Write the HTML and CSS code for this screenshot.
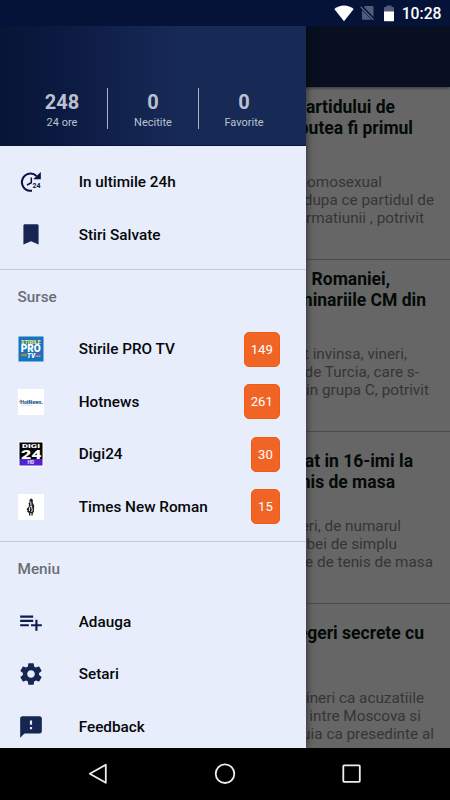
FILE: index.html
```html
<!DOCTYPE html>
<html lang="ro">
<head>
<meta charset="utf-8">
<title>Stiri</title>
<link rel="stylesheet" href="styles.css">
</head>
<body>
<div class="phone">
  <header class="status">
    <svg class="wifi" width="20" height="17" viewBox="0 0 20 17"><path d="M.3 4.1C5.700-.6 14.300-.6 19.700 4.100L10 16.200z" fill="#fff"/></svg>
    <svg class="sim" width="15" height="16" viewBox="0 0 15 16"><path d="M5 1h7.500q1 0 1 1v10L4 2zM2 5l9.700 9.800H3q-1 0-1-1z" fill="#505c78"/><path d="M.7 1.800l12.800 13" stroke="#68738b" stroke-width="1.200"/></svg>
    <svg class="battery" width="10" height="17" viewBox="0 0 10 17"><path d="M0 2.500Q0 2 .6 2H2.500V.5h5V2h1.900q.6 0 .6.500V7H0z" fill="#505c78"/><path d="M0 6.500h10v9q0 .7-.7.700H.7q-.7 0-.7-.7z" fill="#fff"/></svg>
    <span class="clock">10:28</span>
  </header>

  <div class="screen">
    <main class="feed">
      <div class="appbar"></div>
      <article class="story first">
        <h2><span class="r55">partidului de</span><span class="r37">putea fi primul</span></h2>
        <p><span class="r68">homosexual</span><span class="r16">dupa ce partidul de</span><span class="r26">formatiunii , potrivit</span></p>
      </article>
      <article class="story second">
        <h2><span class="r60">Romaniei,</span><span class="r24">preliminariile CM din</span></h2>
        <p><span class="r43">fost invinsa, vineri,</span><span class="r31">de Turcia, care s-</span><span class="r21">din grupa C, potrivit</span></p>
      </article>
      <article class="story third">
        <h2><span class="r37">eliminat in 16-imi la</span><span class="r55">tenis de masa</span></h2>
        <p><span class="r49">vineri, de numarul</span><span class="r53">probei de simplu</span><span class="r17">e de tenis de masa</span></p>
      </article>
      <article class="story fourth">
        <h2><span class="r26">alegeri secrete cu</span></h2>
        <p><span class="r26">vineri ca acuzatiile</span><span class="r29">intre Moscova si</span><span class="r16">ingaduia ca presedinte al</span></p>
      </article>
    </main>

    <aside class="drawer">
      <div class="stats">
        <div class="stat"><b>248</b><span>24 ore</span></div>
        <div class="stat"><b>0</b><span>Necitite</span></div>
        <div class="stat"><b>0</b><span>Favorite</span></div>
      </div>
      <nav class="group">
        <a class="item"><span class="icon"><svg width="26" height="26" viewBox="0 0 26 26"><path d="M14 21.800H12A8.600 8.600 0 1 1 18.500 7" fill="none" stroke="#0b0f45" stroke-width="2"/><path d="M22.800 3V10.200h-7.600z" fill="#0b0f45"/><path d="M13.300 8.500v5.200l-4.300 2.300" fill="none" stroke="#0b0f45" stroke-width="1.500"/><text x="14.600" y="18.600" textLength="8" lengthAdjust="spacingAndGlyphs" class="tiny24">24</text></svg></span>In ultimile 24h</a>
        <a class="item"><span class="icon"><svg width="26" height="26" viewBox="0 0 24 24"><path d="M17.700 2H6.300C5.600 2 5 2.600 5 3.300V20.700l7-3 7 3V3.300C19 2.600 18.400 2 17.700 2z" fill="#152653"/></svg></span>Stiri Salvate</a>
      </nav>
      <nav class="group">
        <h3>Surse</h3>
        <a class="item"><span class="icon"><svg width="26" height="26" viewBox="0 0 26 26"><rect x=".5" y=".5" width="25" height="25" fill="#1673bf"/><text x="3" y="7.800" textLength="19.500" lengthAdjust="spacingAndGlyphs" class="logo yellow">STIRILE</text><path d="M3 17.500h6v1H3z" fill="#d33"/><path d="M3 18.500h6v1H3z" fill="#eb3"/><path d="M3 19.500h6v1H3z" fill="#3a5"/><path d="M17.500 17.500h5v2h-5z" fill="#c33867"/><path d="M17.500 19.500h5V21h-5z" fill="#54b9db"/><text x="2.700" y="16.200" textLength="20" lengthAdjust="spacingAndGlyphs" class="logo pro">PRO</text><text x="9" y="21.500" class="logo tv">TV</text></svg></span>Stirile PRO TV<em>149</em></a>
        <a class="item"><span class="icon"><svg width="26" height="26" viewBox="0 0 26 26"><path d="M0 0h26v26H0z" fill="#fff"/><path d="M3.200 10L.5 12.500 3.200 15z" fill="#f5b829"/><text x="2.300" y="14.600" textLength="22.700" lengthAdjust="spacingAndGlyphs" class="logo hot">HotNews.</text><path d="M3 16.200h11" stroke="#c4dbe9" stroke-width=".7"/></svg></span>Hotnews<em>261</em></a>
        <a class="item"><span class="icon"><svg width="26" height="26" viewBox="0 0 26 26"><path d="M0 0h26v26H0z" fill="#f7f7f8"/><path d="M1.500 1.500h23V18h-23z" fill="#050505"/><path d="M1.500 18h23v6.500h-23z" fill="#4f24d0"/><text x="4" y="6.800" textLength="18" lengthAdjust="spacingAndGlyphs" class="logo digi">DIGI</text><text x="3" y="17.500" textLength="20.500" lengthAdjust="spacingAndGlyphs" class="logo big">24</text><text x="9.500" y="23" class="logo hd">HD</text></svg></span>Digi24<em>30</em></a>
        <a class="item"><span class="icon"><svg width="26" height="26" viewBox="0 0 26 26"><path d="M0 0h26v26H0z" fill="#fff"/><path d="M12.800 4.500c2 0 2.400 2 1.900 4l1.500 3.300-.3 6.200-1 1-.3 2.500h-1.200V19h-1v2.500H11V19l-1.800-1.300.2-1.700-1-.8 2.300-2.400.3-2.300-.7-.8 1.200-1.500c-.2-2 .2-3.500 1.300-3.500z" fill="#222"/><path d="M11.700 7.500l1.200 1 .1 3-1.500 2v3.500M13.300 12l1 4-.8 2" stroke="#e2e2e2" fill="none" stroke-width="1"/></svg></span>Times New Roman<em>15</em></a>
      </nav>
      <nav class="group">
        <h3>Meniu</h3>
        <a class="item"><span class="icon"><svg width="26" height="26" viewBox="0 0 24 24"><path d="M14 10H2v2h12v-2zm0-4H2v2h12V6zm4 8v-4h-2v4h-4v2h4v4h2v-4h4v-2h-4zM2 14h8v2H2z" fill="#101b51"/></svg></span>Adauga</a>
        <a class="item"><span class="icon"><svg width="26" height="26" viewBox="0 0 24 24"><path d="M19.430 12.980c.04-.32.07-.64.07-.98s-.03-.66-.07-.98l2.110-1.650c.19-.15.24-.42.12-.64l-2-3.460c-.12-.22-.39-.3-.61-.22l-2.490 1c-.52-.4-1.080-.73-1.690-.98l-.38-2.650C14.460 2.180 14.250 2 14 2h-4c-.25 0-.46.18-.49.42l-.38 2.650c-.61.25-1.170.59-1.690.98l-2.490-1c-.23-.09-.49 0-.61.22l-2 3.460c-.13.22-.07.49.12.64l2.110 1.650c-.04.32-.07.65-.07.98s.03.66.07.98l-2.110 1.650c-.19.15-.24.42-.12.64l2 3.460c.12.22.39.3.61.22l2.490-1c.52.4 1.080.73 1.690.98l.38 2.650c.03.24.24.42.49.42h4c.25 0 .46-.18.49-.42l.38-2.650c.61-.25 1.170-.59 1.690-.98l2.490 1c.23.09.49 0 .61-.22l2-3.460c.12-.22.07-.49-.12-.64l-2.110-1.650zM12 15.500c-1.930 0-3.500-1.570-3.500-3.500s1.570-3.500 3.500-3.500 3.500 1.570 3.500 3.500-1.570 3.500-3.500 3.500z" fill="#152653"/></svg></span>Setari</a>
        <a class="item"><span class="icon"><svg width="26" height="26" viewBox="0 0 24 24"><path d="M20 2H4c-1.100 0-1.990.9-1.990 2L2 22l4-4h14c1.100 0 2-.9 2-2V4c0-1.100-.9-2-2-2zm-7 12h-2v-2h2v2zm0-4h-2V6h2v4z" fill="#152653"/></svg></span>Feedback</a>
      </nav>
    </aside>
  </div>

  <footer class="navbar">
    <svg width="22" height="24" viewBox="0 0 22 24"><path d="M18.800 2.800v18L2.800 11.800z"/></svg>
    <svg width="22" height="24" viewBox="0 0 22 24"><circle cx="11" cy="11.700" r="9.300"/></svg>
    <svg width="22" height="24" viewBox="0 0 22 24"><rect x="2.300" y="3.300" width="16.500" height="16.500" rx=".8"/></svg>
  </footer>
</div>
</body>
</html>
```

FILE: styles.css
```css
* { box-sizing: border-box; }
body { margin: 0; font-family: Roboto, "Liberation Sans", sans-serif; }
.phone { width: 450px; height: 800px; display: flex; flex-direction: column; overflow: hidden; background: #000; }

.status { height: 26px; flex: none; background: #051338; display: flex; align-items: flex-start; justify-content: flex-end; padding: 5px 8.500px 0 0; color: #fff; }
.status svg { flex: none; }
.wifi { margin-right: 6px; }
.sim { margin-right: 8.500px; }
.battery { margin-right: 8px; }
.clock { font-size: 15.700px; font-weight: 500; line-height: 18px; }

.screen { position: relative; height: 722px; flex: none; overflow: hidden; background: #666; }
.appbar { height: 61px; background: #080f20; box-shadow: 0 1px 3px rgba(0, 0, 0, .5); }
.story { border-bottom: 1px solid #4b4b4b; text-align: right; white-space: nowrap; display: flex; flex-direction: column; justify-content: space-between; }
.story span { display: block; }
.story h2 { margin: 0; font-size: 17.500px; line-height: 21px; font-weight: 700; color: #040a06; }
.story p { margin: 0; font-size: 15.300px; line-height: 18px; color: #353535; }
.first { height: 173px; padding: 10px 0 32px; }
.second { height: 172px; padding: 9px 0 32px; }
.third { height: 172px; padding: 19px 0 32px; }
.fourth { height: 172px; padding: 19px 0 33px; border: 0; }
.r16 { padding-right: 16px; }
.r17 { padding-right: 17px; }
.r21 { padding-right: 21px; }
.r24 { padding-right: 24px; }
.r26 { padding-right: 26px; }
.r29 { padding-right: 29px; }
.r31 { padding-right: 31px; }
.r37 { padding-right: 37px; }
.r43 { padding-right: 43px; }
.r49 { padding-right: 49px; }
.r53 { padding-right: 53px; }
.r55 { padding-right: 55px; }
.r60 { padding-right: 60px; }
.r68 { padding-right: 68px; }

.drawer { position: absolute; top: 0; left: 0; width: 306px; height: 722px; overflow: hidden; background: #e7edfb; box-shadow: 0 0 8px rgba(0, 0, 0, .65); }
.stats { height: 120px; display: flex; padding: 62px 17px 0 17px; background: linear-gradient(90deg, #071536 0, #0b1a41 20%, #12234e 42%, #172a55 60%, #172a55 100%); border-bottom: 1px solid #09133a; }
.stat { flex: 1; height: 41px; display: flex; flex-direction: column; align-items: center; color: #bbc1d0; }
.stat + .stat { border-left: 1px solid #b0b3b8; }
.stat b { font-size: 20px; line-height: 23px; margin-top: 3px; }
.stat span { font-size: 11px; line-height: 14px; margin-top: 2px; }

.group { padding: 10px 0 7.500px; }
.group + .group { border-top: 1px solid #c5cad7; padding: 0 0 8.500px; }
.group h3 { margin: 0; height: 53.400px; padding-left: 17.500px; font-size: 15.300px; line-height: 55px; font-weight: 500; color: #6b6e75; }
.item { height: 52.500px; display: flex; align-items: center; padding: 0 26px 0 17.500px; font-size: 15.300px; font-weight: 500; color: #060709; }
.group:last-child .item { height: 52.400px; }
.icon { width: 26px; height: 26px; margin-right: 35.200px; flex: none; }
.icon svg { display: block; }
.item em { margin-left: auto; height: 35px; padding: 0 6.200px; border-radius: 5px; background: #f06526; border: 1px solid #f25b12; color: #fff; font-size: 13.100px; font-style: normal; font-weight: 400; line-height: 34px; }
.tiny24 { font: 700 7.500px Roboto, sans-serif; fill: #0b0f45; }
.logo { font-family: Roboto, sans-serif; font-weight: 900; }
.yellow { font-size: 5.500px; fill: #f3ea70; }
.pro { font-size: 10px; fill: #fff; }
.tv { font-size: 6.500px; font-style: italic; fill: #fff; }
.hot { font-size: 6px; font-weight: 900; fill: #255b94; }
.digi { font-size: 5.500px; fill: #fff; }
.big { font-size: 12.500px; fill: #fff; }
.hd { font-size: 5px; fill: #e2dafc; }

.navbar { height: 52px; flex: none; background: #000; display: flex; justify-content: center; align-items: center; gap: 105px; }
.navbar svg { fill: none; stroke: #eee; stroke-width: 1.800; stroke-linejoin: round; }
```
